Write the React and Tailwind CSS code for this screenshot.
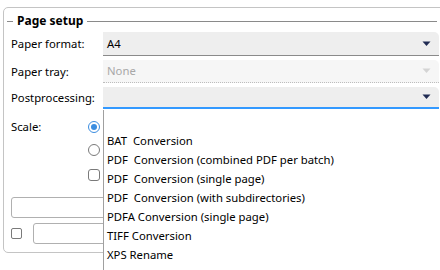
import React from 'react';

const font = { fontFamily: '"Noto Sans", "Open Sans", Arial, sans-serif' };

const Arrow = ({ disabled }) => (
  <svg width="9" height="6" viewBox="0 0 9 6" className="shrink-0">
    <path d="M0.5 0.5h8L4.5 5z" fill={disabled ? '#d4d4d4' : '#1f2a52'} />
  </svg>
);

const Combo = ({ value, disabled, focused, className }) => (
  <div
    className={
      'flex items-center justify-between pl-[4px] pr-[8px] rounded-tr-[5px] ' +
      (disabled ? 'bg-[#f6f6f6] text-[#a8a8a8] border-b border-dotted border-[#bdbdbd] ' : 'bg-[#eeeeee] text-black ') +
      (focused ? 'border-b-2 border-[#3399ff] ' : '') +
      (!disabled && !focused ? 'border-b border-[#8a8a8a] ' : '') +
      className
    }
  >
    <span>{value}</span>
    <Arrow disabled={disabled} />
  </div>
);

const items = [
  '',
  'BAT  Conversion',
  'PDF  Conversion (combined PDF per batch)',
  'PDF  Conversion (single page)',
  'PDF  Conversion (with subdirectories)',
  'PDFA Conversion (single page)',
  'TIFF Conversion',
  'XPS Rename',
];

export default function App() {
  return (
    <div className="relative w-[440px] h-[270px] overflow-hidden bg-white text-[11.3px] leading-none text-black" style={font}>
      <div className="mt-[7px] ml-[3px] w-[460px] h-[246px] border border-[#c4c4c4] rounded-[5px] pl-[7px] pt-[6px]">
        <div className="flex items-center h-[14px] -ml-[4px] w-[430px]">
          <div className="w-[6px] h-px bg-[#8a8a8a]" />
          <span className="mx-[4px] font-bold text-[12px]">Page setup</span>
          <div className="flex-1 h-px bg-[#8a8a8a]" />
        </div>

        <div className="flex items-stretch mt-[4px] h-[24px]">
          <div className="w-[92px] flex items-center">Paper format:</div>
          <Combo value="A4" className="w-[336px]" />
        </div>
        <div className="flex items-stretch mt-[4px] h-[23px]">
          <div className="w-[92px] flex items-center">Paper tray:</div>
          <Combo value="None" disabled className="w-[336px]" />
        </div>
        <div className="flex items-stretch mt-[4px] h-[22px]">
          <div className="w-[92px] flex items-center">Postprocessing:</div>
          <Combo value="" focused className="w-[336px]" />
        </div>

        <div className="flex mt-[12px]">
          <div className="w-[77px] h-[12px] flex items-center">Scale:</div>
          <div className="flex flex-col">
            <div className="w-[12px] h-[12px] rounded-full border border-[#3b8de0] flex items-center justify-center">
              <div className="w-[6px] h-[6px] rounded-full bg-[#3b8de0]" />
            </div>
            <div className="mt-[11px] w-[12px] h-[12px] rounded-full border border-[#7a7a7a]" />
            <div className="mt-[13px] w-[12px] h-[12px] rounded-[3px] border border-[#7a7a7a]" />
          </div>
        </div>

        <div className="mt-[16px] w-[100px] h-[21px] border border-[#b0b0b0] rounded-[3px]" />
        <div className="flex items-center mt-[5px]">
          <div className="w-[11px] h-[11px] rounded-[2px] border border-[#7a7a7a]" />
          <div className="ml-[11px] w-[80px] h-[21px] border border-[#b0b0b0] rounded-[3px]" />
        </div>
      </div>

      <div className="absolute left-[103px] top-[110px] w-[340px] h-[162px] bg-white border-l border-[#a0a0a0] pt-[2px]">
        {items.map((t, i) => (
          <div key={i} className="h-[19px] flex items-center pl-[3px] whitespace-pre">
            {t}
          </div>
        ))}
      </div>
    </div>
  );
}
